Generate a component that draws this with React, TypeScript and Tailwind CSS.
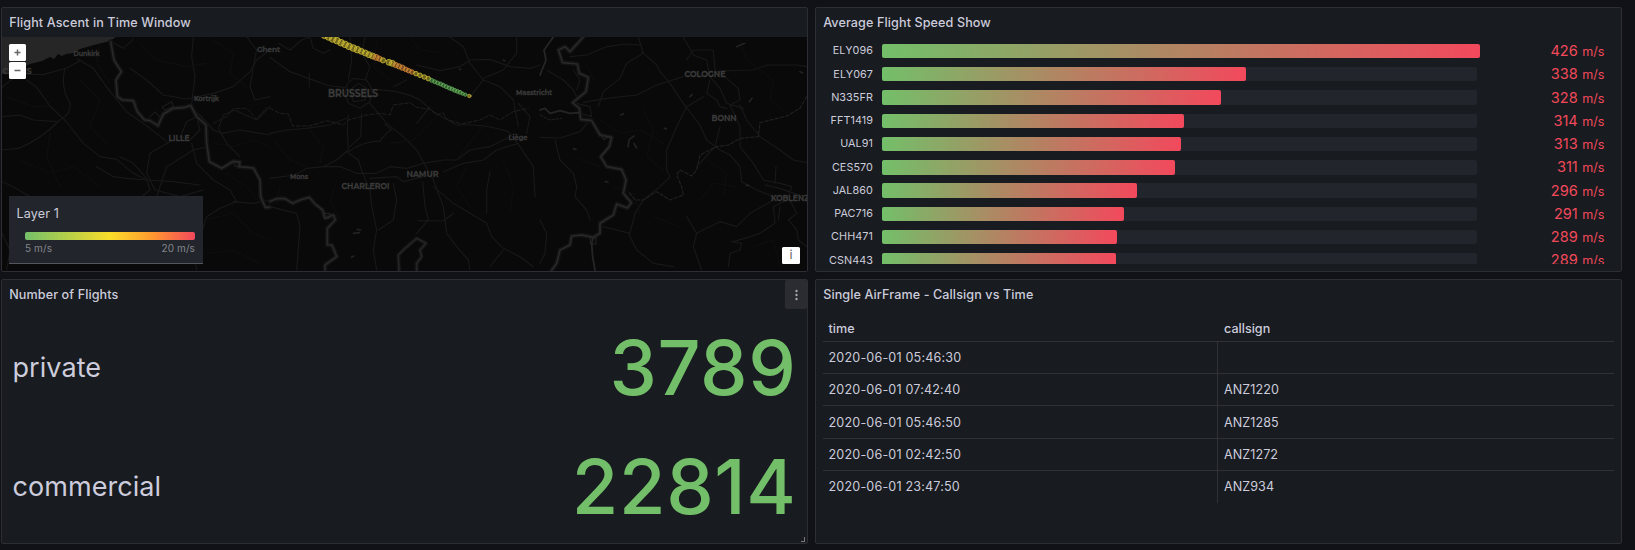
import React from 'react';

type Bar = { name: string; value: number; width: number };

const bars: Bar[] = [
  { name: 'ELY096', value: 426, width: 598 },
  { name: 'ELY067', value: 338, width: 364 },
  { name: 'N335FR', value: 328, width: 339 },
  { name: 'FFT1419', value: 314, width: 302 },
  { name: 'UAL91', value: 313, width: 299 },
  { name: 'CES570', value: 311, width: 293 },
  { name: 'JAL860', value: 296, width: 255 },
  { name: 'PAC716', value: 291, width: 242 },
  { name: 'CHH471', value: 289, width: 235 },
  { name: 'CSN443', value: 289, width: 234 },
];

const rows: [string, string][] = [
  ['2020-06-01 05:46:30', ''],
  ['2020-06-01 07:42:40', 'ANZ1220'],
  ['2020-06-01 05:46:50', 'ANZ1285'],
  ['2020-06-01 02:42:50', 'ANZ1272'],
  ['2020-06-01 23:47:50', 'ANZ934'],
];

const Y = '#cdbb33';
const O = '#d68a36';
const G = '#62ad58';

// Track points: [x, y, radius, colour], in thirds of a pixel.
const track: [number, number, number, string][] = [
  [164, 106, 11, Y], [176, 111, 11, Y], [188, 117, 11, Y], [201, 122, 11, Y], [213, 128, 11, Y],
  [225, 133, 11, Y], [237, 139, 11, Y], [250, 144, 11, Y], [262, 149, 11, Y], [274, 154, 10, Y],
  [286, 159, 10, Y], [297, 164, 10, Y], [308, 168, 10, Y], [318, 172, 10, O], [328, 176, 9, O], [339, 181, 9, Y],
  [357, 187, 10, Y], [367, 190, 10, Y], [377, 195, 9, O], [387, 199, 9, O], [397, 203, 9, O],
  [407, 208, 8, O], [416, 212, 8, O], [426, 216, 8, O], [438, 221, 8, Y], [450, 226, 8, Y],
  [463, 231, 8, Y], [475, 236, 8, Y], [485, 241, 7, G], [494, 245, 7, G], [503, 249, 7, G],
  [512, 252, 7, G], [520, 256, 7, G], [529, 260, 7, G], [538, 264, 7, G], [546, 267, 7, G],
  [554, 271, 7, G], [562, 274, 7, G], [570, 277, 7, G], [578, 281, 6, G], [586, 284, 6, G],
  [598, 288, 6, Y],
];

function Panel({ title, children }: { title: string; children: React.ReactNode }) {
  return (
    <section className="flex h-[265px] w-[807px] flex-col overflow-hidden rounded-[2px] border border-[#2d2e33] bg-[#181b1f]">
      <header className="flex h-[29px] shrink-0 items-center pl-[7.200px] pt-[2px] text-[12.6px] font-medium tracking-[0.100px]">
        {title}
      </header>
      {children}
    </section>
  );
}

function MapDrawing() {
  return (
    <svg className="block h-[234px] w-[805px]" viewBox="2 37 805 234" fill="none" strokeLinejoin="round" strokeLinecap="round">
      <rect x="2" y="37" width="805" height="234" fill="#090909" />
      <path
        d="M2 37H116L110 41 94 45 80 49 74 53 66 54 62 56 58 54 54 59 50 57 42 61 30 64 22 68 10 71 2 74Z"
        fill="#262626"
      />

      <g transform="scale(.33333)">
        <g stroke="#181818" strokeWidth="3.500">
          <path d="M6 262Q50 222 84 222L130 224 200 204 240 182" />
          <path d="M80 240L110 262 150 318 200 366 250 430 300 470 350 478 400 520 440 540 520 545 600 555" />
          <path d="M195 205Q180 260 210 310 215 340 180 360 120 420 55 445L6 450" />
          <path d="M6 350L60 345 100 360 170 365" />
          <path d="M232 176L280 205 330 275 380 335 450 385 500 425" />
          <path d="M335 125L370 145 400 118M580 111L575 170 585 230 575 310" />
          <path d="M390 205L440 240 490 285 560 297 640 280 700 260 750 215 770 180 810 150" />
          <path d="M565 320L600 345 640 390 665 400 720 390 810 405" />
          <path d="M810 320L770 360 735 345 705 330 670 345 655 385 680 430 720 470" />
          <path d="M545 400L560 365 590 350 600 390 570 420 540 410" />
          <path d="M510 425L450 460 440 520 465 570 540 590 610 570" />
          <path d="M575 430L590 490 640 540 690 570 710 605 660 625 620 650 605 700 580 750 590 810" />
          <path d="M625 440L580 450 500 500 470 590M290 500L340 530 380 535 440 540" />
          <path d="M6 545L40 560 90 590M6 700L30 750 20 810M700 605L760 610 810 600" />
          <path d="M740 110L770 150 760 200 750 260 765 300 810 290" />
          <path d="M400 610L450 570 440 535 400 490 360 470" />
        </g>
        <g stroke="#111" strokeWidth="2.5">
          <path d="M20 290L100 320 150 318M240 240L300 300 270 380 320 430M420 130L470 180 560 200 620 190" />
          <path d="M60 480L150 520 220 500 300 560M640 430L700 440 760 420 810 440M680 520L740 560 770 600" />
          <path d="M300 130L290 190 330 250M640 120L700 160 690 220 740 260M150 400L140 470 180 560" />
          <path d="M610 660L700 640 760 700 810 720M620 760L700 750 780 790" />
        </g>
        <path
          d="M332 125L342 180 364 215 348 240 352 290 368 300 400 302 412 335 434 360 450 362 474 377 490 342 520 325 556 322 572 316 590 350 618 375 620 430 628 485 665 505 690 490 700 484 720 486 716 500 760 504 780 540 782 590 796 622 810 622"
          stroke="#131313" strokeWidth="14"
        />
        <path
          d="M332 125L342 180 364 215 348 240 352 290 368 300 400 302 412 335 434 360 450 362 474 377 490 342 520 325 556 322 572 316 590 350 618 375 620 430 628 485 665 505 690 490 700 484 720 486 716 500 760 504 780 540 782 590 796 622 810 622"
          stroke="#282828" strokeWidth="5"
        />
        <path d="M450 350L465 335 478 350M488 320L515 305 520 320 495 330ZM700 484L705 500 722 495" stroke="#202020" strokeWidth="3" />
        <path d="M640 370L680 350 700 325 740 325 770 358 800 322" stroke="#1c1c1c" strokeWidth="3" strokeDasharray="12 5" />
      </g>

      <g transform="translate(270 0) scale(.33333)">
        <g stroke="#181818" strokeWidth="3.500">
          <path d="M0 172L60 215 115 235 180 258 225 262" />
          <path d="M25 130L60 150 95 120 120 111M120 111L130 145 160 160 180 150" />
          <path d="M118 220L118 260M240 111L245 180 235 240M285 111L275 160 300 200 285 240" />
          <path d="M232 250L250 235 290 240 305 265 300 305 270 325 235 310 225 280ZM240 270L265 250 290 265 285 300 250 305Z" />
          <path d="M300 268Q400 270 450 300L490 335 560 375Q640 370 715 395" />
          <path d="M300 310L350 370 400 410 440 450 490 540 520 620 530 700 560 740 595 780 600 810" />
          <path d="M235 345L232 390 235 450 200 480 160 500 110 505 75 525 0 535" />
          <path d="M235 455Q290 420 330 424 350 395 365 390 Q345 370 345 375" />
          <path d="M0 400L50 390 110 385 180 375 230 355M275 340L272 410 240 440" />
          <path d="M160 500L210 500 260 520 320 520 360 500 410 505 460 490 520 480 560 480 600 450 660 440 720 410" />
          <path d="M230 455L265 480 278 520 300 570 305 620 320 690 310 750 320 810" />
          <path d="M300 535L380 530 400 545 460 530M370 550L380 600 370 660 325 690" />
          <path d="M490 560L550 610 600 640 650 670 665 710 700 745 750 770 790 800" />
          <path d="M445 662L520 663 550 640M458 545L465 620 475 660 440 700" />
          <path d="M660 515L650 570 650 640M700 750L660 800M0 620L80 640 90 680 80 810" />
          <path d="M440 195L510 212 570 200 600 180 660 178 720 200 780 205 810 195" />
          <path d="M540 111L580 140 600 190 640 240 690 260 730 300 745 380" />
          <path d="M640 240L600 290M640 235L700 210 740 160 740 111M715 395L750 440 790 500 795 590" />
          <path d="M520 515L580 490 640 480 680 450 745 430" />
          <path d="M370 260L410 240M480 320L440 370M770 400L780 350 745 310" />
        </g>
        <g stroke="#111" strokeWidth="2.5">
          <path d="M10 420L60 480 110 500M110 380L160 440 150 490M360 430L430 420 500 350M560 480L620 400 650 370" />
          <path d="M30 560L20 610M200 540L180 600 210 660M590 500L560 560 600 620M700 480L730 560 720 640" />
          <path d="M420 111L450 150 520 160M320 130L310 200 360 240" />
        </g>
        <path d="M0 604L20 596 45 596 68 610 90 600 118 592 135 612 158 630 165 655 190 645 196 660 172 685 172 735 186 735 200 770 165 795 165 810" stroke="#131313" strokeWidth="14" />
        <path d="M0 604L20 596 45 596 68 610 90 600 118 592 135 612 158 630 165 655 190 645 196 660 172 685 172 735 186 735 200 770 165 795 165 810" stroke="#272727" strokeWidth="5" />
        <path d="M387 811L385 765 405 745 440 715 468 730 450 750 455 770 440 790 440 811" stroke="#131313" strokeWidth="13" />
        <path d="M387 811L385 765 405 745 440 715 468 730 450 750 455 770 440 790 440 811" stroke="#242424" strokeWidth="5" />
        <path d="M160 640L180 640 178 655 165 655Z" stroke="#252525" strokeWidth="3" />
        <path d="M0 325L30 340 55 342 68 378 120 378 170 362 220 375 235 360 290 345 330 340 360 345 370 315 420 308 440 322 480 328 500 345 520 338 530 358 575 372 630 360 660 345 690 360 730 335 775 325" stroke="#202020" strokeWidth="3" strokeDasharray="12 6" />
        <path d="M250 700l18-2M262 688l10 2M244 772l8-4M700 180l4 2M568 208l4 0" stroke="#222" strokeWidth="5" />
      </g>

      <g transform="translate(540 0) scale(.33333)">
        <g stroke="#181818" strokeWidth="3.500">
          <path d="M90 170L140 165 200 140 255 132 300 135" />
          <path d="M295 111L310 160 260 190 240 235 190 275 175 320" />
          <path d="M130 307L200 295 290 285 350 255 430 230" />
          <path d="M305 155L350 195 360 215 390 250 430 310 480 375 500 420 540 450 570 465 600 500 605 545 650 570 700 590" />
          <path d="M430 111L460 165 500 180 510 230 540 265 560 310 610 325" />
          <path d="M440 180L460 150 520 150 525 210 560 235 595 265 600 300 570 315 600 380 600 440 640 490 670 540" />
          <path d="M540 213L640 210 680 195 770 195 800 200M510 240L500 280 530 300 540 320 560 325" />
          <path d="M490 290L440 320 410 380 380 450 380 510 390 530 360 560 310 600 285 640 270 700 230 690 190 680" />
          <path d="M600 315L620 360 660 410 720 450 760 480 800 488" />
          <path d="M0 412L60 414 120 395 150 360M45 420L60 480 100 520 110 560 105 590 140 630 150 660" />
          <path d="M20 210L70 240 100 270 115 300M100 210L120 240 110 270" />
          <path d="M265 700L290 750 340 790 400 800M440 650L470 700 460 740 485 810M470 700L540 665 590 680 630 640 700 600" />
          <path d="M670 540L720 550 755 560 740 600 700 620 705 670 660 700 630 710 580 725" />
          <path d="M675 555L720 565 790 590M708 500L705 550M720 620L715 660M750 600L770 640 745 660 770 690 775 720 800 740" />
          <path d="M575 725L605 730 600 750 570 760 565 800M110 310L150 320 155 350 120 340" />
          <path d="M540 380L525 440 470 500M0 660L20 700 15 760 0 790" />
        </g>
        <g stroke="#111" strokeWidth="2.5">
          <path d="M180 360L240 400 300 390 370 430M160 240L140 190M600 120L620 180 700 240 690 300 740 340" />
          <path d="M220 560L280 580 300 640M480 600L520 550 590 560M640 740L700 720 720 800M340 650L420 680M100 470L180 500" />
          <path d="M310 330L340 390 320 470 370 510M500 480L560 520 550 590" />
        </g>
        <path
          d="M130 111L90 155 75 140 55 150 68 188 112 192 118 220 145 232 138 275 98 308 118 325 122 358 155 362 180 405 215 412 208 440 182 470 200 500 245 508 258 540 250 580 274 608 262 624 230 612 220 645 180 670 180 700 160 712 125 705 95 708 90 735 60 750 50 790 35 811"
          stroke="#131313" strokeWidth="14"
        />
        <path
          d="M130 111L90 155 75 140 55 150 68 188 112 192 118 220 145 232 138 275 98 308 118 325 122 358 155 362 180 405 215 412 208 440 182 470 200 500 245 508 258 540 250 580 274 608 262 624 230 612 220 645 180 670 180 700 160 712 125 705 95 708 90 735 60 750 50 790 35 811"
          stroke="#282828" strokeWidth="5"
        />
        <path d="M40 111L12 150 18 180 0 225M0 330L15 325 30 340 60 332 90 340 118 338M160 712L155 730 158 770 165 811" stroke="#252525" strokeWidth="5.500" />
        <path d="M152 712h16v20h-16ZM180 400l12 20 14-12" stroke="#252525" strokeWidth="3" />
        <path d="M800 290L780 325 740 348 660 368 655 410 600 415 565 435 530 440 480 465 470 510 455 528 420 510 410 525 425 560 430 585 390 600 350 575 310 600 285 600 265 575" stroke="#202020" strokeWidth="3.5" strokeDasharray="10 6" />
        <path d="M0 345L30 360 65 355" stroke="#202020" strokeWidth="3" strokeDasharray="8 5" />
        <path d="M264 440l4-22 14-10M282 430l8 14M242 345l8-4M590 140l24-10M628 305l8-10M618 556l8 0M450 290l6-6M100 446l8 2M196 545l8 1M373 385l6 1M780 215l8 4" stroke="#222" strokeWidth="5" />
      </g>

      <g className="font-['Montserrat','Open_Sans',sans-serif]" fill="#424242" stroke="#333" strokeWidth="0.4" textAnchor="middle" fontWeight="600">
        <g fontSize="7.400">
          <text x="86.500" y="55.600" textLength="26" lengthAdjust="spacingAndGlyphs">Dunkirk</text>
          <text x="206.500" y="101" textLength="25" lengthAdjust="spacingAndGlyphs">Kortrijk</text>
          <text x="268.500" y="51.600" textLength="23" lengthAdjust="spacingAndGlyphs">Ghent</text>
          <text x="299" y="179.300" textLength="18" lengthAdjust="spacingAndGlyphs">Mons</text>
          <text x="534" y="95" textLength="36" lengthAdjust="spacingAndGlyphs">Maastricht</text>
          <text x="518" y="139.500" textLength="19" lengthAdjust="spacingAndGlyphs">Liège</text>
        </g>
        <g fontSize="8.800">
          <text x="17" y="73.700" textLength="29" lengthAdjust="spacingAndGlyphs">CALAIS</text>
          <text x="179" y="141" textLength="21" lengthAdjust="spacingAndGlyphs">LILLE</text>
          <text x="353" y="97.200" fontSize="10" textLength="50" lengthAdjust="spacingAndGlyphs">BRUSSELS</text>
          <text x="365.500" y="189.200" textLength="48" lengthAdjust="spacingAndGlyphs">CHARLEROI</text>
          <text x="422.500" y="177.200" textLength="32" lengthAdjust="spacingAndGlyphs">NAMUR</text>
          <text x="705" y="77" textLength="41" lengthAdjust="spacingAndGlyphs">COLOGNE</text>
          <text x="724" y="120.500" textLength="25" lengthAdjust="spacingAndGlyphs">BONN</text>
          <text x="790" y="201.200" textLength="38" lengthAdjust="spacingAndGlyphs">KOBLENZ</text>
        </g>
      </g>

      <g transform="translate(270 0) scale(.33333)">
        {track.map(([x, y, r, c], i) => (
          <circle key={i} cx={x} cy={y} r={r - 1} fill={c} fillOpacity="0.5" stroke={c} strokeWidth="3" strokeOpacity="0.75" />
        ))}
      </g>
    </svg>
  );
}

const mapButton =
  'flex w-[17px] items-center justify-center rounded-[1.500px] bg-white text-[#666]';

function FlightMap() {
  return (
    <div className="relative h-[234px]">
      <MapDrawing />
      <div className="absolute left-[7px] top-[7px] flex flex-col gap-px">
        <button className={mapButton + ' h-[17px]'}>
          <svg width="7" height="7" stroke="currentColor" strokeWidth="1.500"><path d="M3.500 .500v6M.500 3.500h6" /></svg>
        </button>
        <button className={mapButton + ' h-[17px]'}>
          <svg width="7" height="7" stroke="currentColor" strokeWidth="1.500"><path d="M.500 3.500h6" /></svg>
        </button>
      </div>
      <div className="absolute left-[7px] top-[159px] h-[68px] w-[194px] border-b border-[#55565c] bg-[#22252b] pl-[7.500px] pt-[8px]">
        <div className="text-[12.6px] leading-[19px] tracking-[0.12px]">Layer 1</div>
        <div className="ml-[8.500px] mt-[9px] h-[8px] w-[170px] rounded-[2px] bg-[linear-gradient(90deg,#73bf69,#fade2a_50%,#ff9830_75%,#f2495c)]" />
        <div className="ml-[8.500px] mt-[1px] flex w-[170px] justify-between text-[10px] leading-[15px] tracking-[0.100px] text-[#84858e]">
          <span>5 m/s</span>
          <span>20 m/s</span>
        </div>
      </div>
      <button className="absolute left-[780px] top-[210px] flex h-[17px] w-[18px] items-center justify-center rounded-[1.500px] bg-white text-[12.600px] leading-none text-[#666]">
        i
      </button>
    </div>
  );
}

function SpeedBars() {
  return (
    <div className="mx-[7px] h-[227px] overflow-hidden pt-[6.900px]">
      {bars.map((b) => (
        <div key={b.name} className="flex h-[23.270px] items-start">
          <div className="w-[50px] pt-[0.400px] text-right text-[10.800px] leading-[13px] tracking-[0.080px]">{b.name}</div>
          <div className="ml-[9px] h-[14.300px] w-[595px] shrink-0 rounded-[2px] bg-[#22252b]">
            <div
              className="h-full rounded-[2px] bg-[linear-gradient(90deg,#73bf69,#f2495c)]"
              style={{ width: b.width }}
            />
          </div>
          <div className="flex w-[127.500px] shrink-0 items-baseline justify-end gap-[4.500px] pt-[0.200px] text-[14.600px] leading-[15px] text-[#f2495c]">
            <span>{b.value}</span>
            <span className="text-[12.600px]">m/s</span>
          </div>
        </div>
      ))}
    </div>
  );
}

function Stat({ label, value }: { label: string; value: string }) {
  return (
    <div className="flex h-[118px] items-center justify-between pl-[10.500px] pr-[10.500px]">
      <span className="text-[27px] leading-[32px] tracking-[0.060px]">{label}</span>
      <span className="text-[75.600px] font-medium leading-[80px] tracking-[0.600px] text-[#73bf69]">{value}</span>
    </div>
  );
}

function CallsignTable() {
  return (
    <div className="mx-[7px] text-[12.600px]">
      <div className="flex h-[33px] items-center border-b border-[#2f3136] pt-[8px] font-medium">
        <div className="w-[395px] pl-[5.500px]">time</div>
        <div className="pl-[6px]">callsign</div>
      </div>
      {rows.map(([time, sign], i) => (
        <div
          key={time}
          className={'flex h-[32.200px] ' + (i < rows.length - 1 ? 'border-b border-[#2f3136]' : '')}
        >
          <div className="flex w-[395px] items-center border-r border-[#2f3136] pl-[5.500px] pt-[2px] tracking-[0.160px]">{time}</div>
          <div className="flex items-center pl-[6px] pt-[2px] tracking-[0.050px]">{sign}</div>
        </div>
      ))}
    </div>
  );
}

export default function App() {
  return (
    <div className="h-[550px] w-full overflow-hidden bg-[#111217] pl-px pt-[7px] font-['Inter',sans-serif] text-[#ccccdc]">
      <main className="grid grid-cols-[807px_807px] gap-[7px]">
        <Panel title="Flight Ascent in Time Window">
          <FlightMap />
        </Panel>
        <Panel title="Average Flight Speed Show">
          <SpeedBars />
        </Panel>
        <div className="relative">
          <Panel title="Number of Flights">
            <div className="flex flex-col gap-px">
              <Stat label="private" value="3789" />
              <Stat label="commercial" value="22814" />
            </div>
          </Panel>
          <button className="absolute right-px top-px flex h-[29px] w-[22px] items-center justify-center rounded-[2px] bg-[#2b2c31]">
            <svg width="3" height="12" fill="#a5a6b1">
              <circle cx="1.500" cy="2" r="1.200" />
              <circle cx="1.500" cy="6" r="1.200" />
              <circle cx="1.500" cy="10" r="1.200" />
            </svg>
          </button>
          <span className="absolute bottom-[2px] right-[3px] h-[5px] w-[4px] border-b border-r border-[#77787e]" />
        </div>
        <Panel title="Single AirFrame - Callsign vs Time">
          <CallsignTable />
        </Panel>
      </main>
    </div>
  );
}
